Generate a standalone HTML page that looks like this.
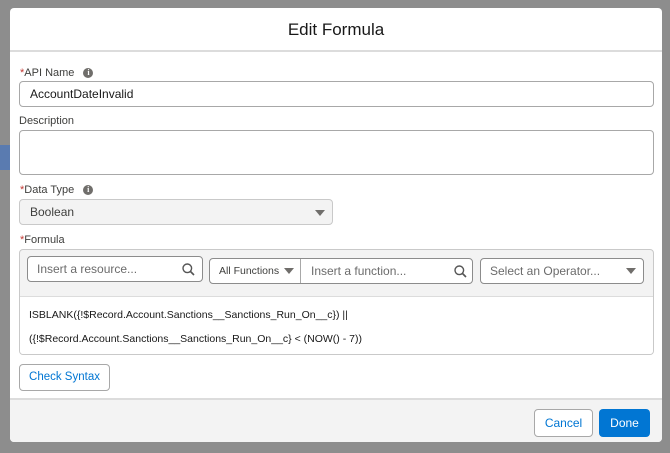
<!DOCTYPE html>
<html><head><style>
*{box-sizing:border-box;margin:0;padding:0}
body{width:670px;height:453px;overflow:hidden;background:#8d8d8d;font-family:"Liberation Sans",sans-serif;font-size:12px;color:#181818;position:relative}
.a{position:absolute}
.modal{left:10px;top:8px;width:652px;height:434px;background:#fff;border-radius:4px;overflow:hidden}
.lbl{font-size:11px;color:#3e3e3c}
.req{color:#c23934}
.inp{border:1px solid #a8a8a8;border-radius:4px;background:#fff}
.info{display:inline-block;width:10px;height:10px;border-radius:50%;background:#706e6b;color:#fff;font-size:8px;font-weight:bold;text-align:center;line-height:10px;vertical-align:middle;margin-left:6px;font-family:"Liberation Serif",serif}
.tri{width:0;height:0;border-left:5px solid transparent;border-right:5px solid transparent;border-top:6px solid #706e6b}
.ph{color:#6b6b6b;font-size:12px}
.btn{border:1px solid #a8a8a8;border-radius:4px;background:#fff;color:#0176d3;font-size:12px;text-align:center}
</style></head><body>
<div class="a" style="left:0;top:145px;width:10px;height:25px;background:#5a7bb0"></div>
<div class="a modal">
  <div class="a" style="left:0;top:0;width:652px;height:44px;border-bottom:2px solid #dcdcdc;text-align:center;line-height:44px;font-size:17px;color:#181818">Edit Formula</div>
  <div class="a lbl" style="left:10px;top:59px"><span class="req">*</span>API Name <span class="info">i</span></div>
  <div class="a inp" style="left:9px;top:73px;width:635px;height:26px;padding-left:10px;line-height:24px">AccountDateInvalid</div>
  <div class="a lbl" style="left:9px;top:107px">Description</div>
  <div class="a inp" style="left:9px;top:122px;width:635px;height:45px"></div>
  <div class="a lbl" style="left:10px;top:176px"><span class="req">*</span>Data Type <span class="info">i</span></div>
  <div class="a inp" style="left:9px;top:191px;width:314px;height:26px;background:#f3f3f3;border-color:#c9c9c9;padding-left:10px;line-height:24px;color:#3e3e3c">Boolean<div class="a tri" style="right:7px;top:10px"></div></div>
  <div class="a lbl" style="left:10px;top:226px"><span class="req">*</span>Formula</div>
  <div class="a" style="left:9px;top:241px;width:635px;height:106px;background:#f3f3f3;border:1px solid #c9c9c9;border-radius:4px;overflow:hidden">
    <div class="a inp ph" style="left:7px;top:6px;width:176px;height:26px;padding-left:9px;line-height:24px;border-color:#8c8c8c">Insert a resource...
      <svg class="a" style="right:7px;top:6px" width="13" height="13" viewBox="0 0 13 13"><circle cx="5.3" cy="5.3" r="4.3" fill="none" stroke="#555" stroke-width="1.4"/><path d="M8.5 8.5L12 12" stroke="#555" stroke-width="1.6"/></svg></div>
    <div class="a inp" style="left:189px;top:8px;width:264px;height:26px;border-color:#8c8c8c">
      <div class="a" style="left:0;top:0;width:91px;height:24px;border-right:1px solid #a8a8a8;padding-left:9px;line-height:24px;font-size:10.5px;color:#3e3e3c">All Functions<div class="a tri" style="right:6px;top:9px"></div></div>
      <div class="a ph" style="left:101px;top:0;line-height:24px">Insert a function...</div>
      <svg class="a" style="right:5px;top:6px" width="13" height="13" viewBox="0 0 13 13"><circle cx="5.3" cy="5.3" r="4.3" fill="none" stroke="#555" stroke-width="1.4"/><path d="M8.5 8.5L12 12" stroke="#555" stroke-width="1.6"/></svg>
    </div>
    <div class="a inp ph" style="left:460px;top:8px;width:164px;height:26px;padding-left:9px;line-height:24px;border-color:#8c8c8c">Select an Operator...<div class="a tri" style="right:7px;top:9px"></div></div>
    <div class="a" style="left:0;top:46px;width:633px;height:58px;background:#fff;border-top:1px solid #dcdcdc;font-size:10.5px;color:#181818">
      <div class="a" style="left:9px;top:12px">ISBLANK({!$Record.Account.Sanctions__Sanctions_Run_On__c}) ||</div>
      <div class="a" style="left:9px;top:36px">({!$Record.Account.Sanctions__Sanctions_Run_On__c} &lt; (NOW() - 7))</div>
    </div>
  </div>
  <div class="a btn" style="left:9px;top:356px;width:91px;height:27px;line-height:25px;font-size:11.5px">Check Syntax</div>
  <div class="a" style="left:0;top:390px;width:652px;height:44px;background:#f3f3f3;border-top:2px solid #dcdcdc">
    <div class="a btn" style="left:524px;top:9px;width:59px;height:28px;line-height:26px">Cancel</div>
    <div class="a" style="left:589px;top:9px;width:51px;height:28px;line-height:28px;background:#0176d3;color:#fff;border-radius:4px;text-align:center">Done</div>
  </div>
</div>
</body></html>
